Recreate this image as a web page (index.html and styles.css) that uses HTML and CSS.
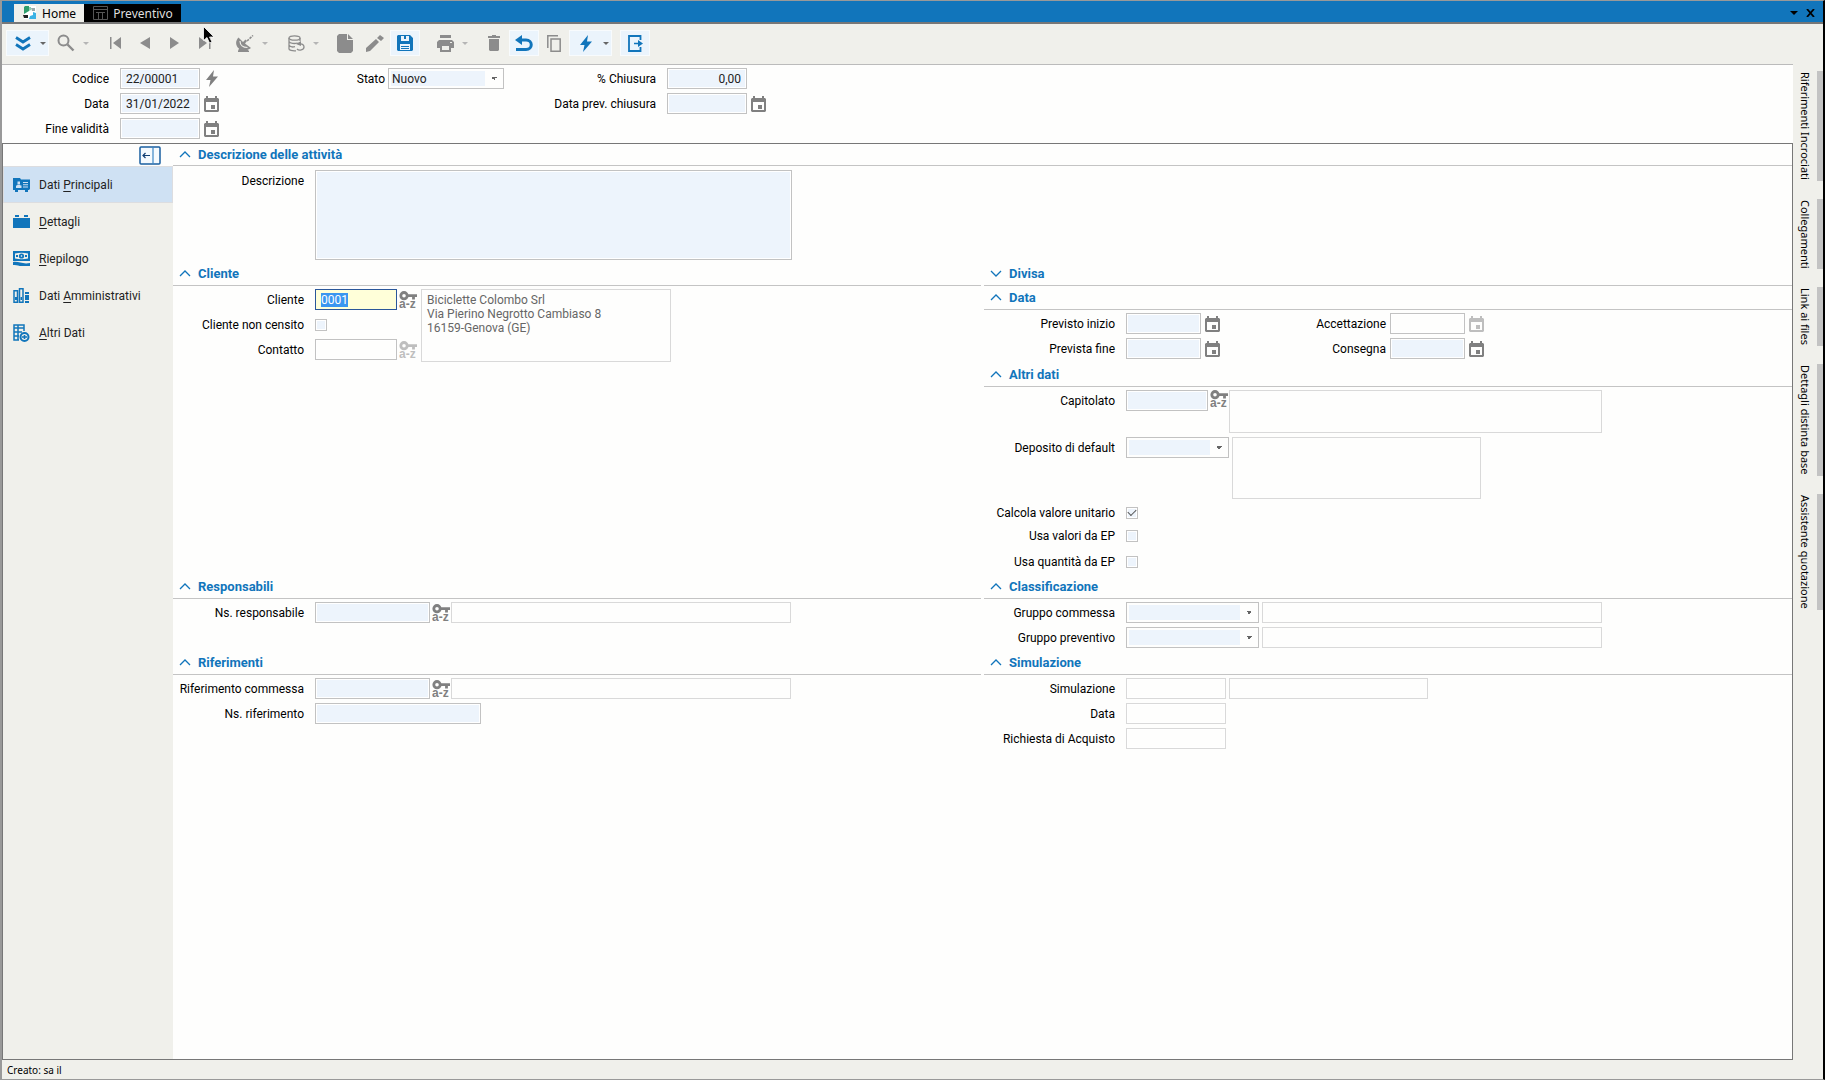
FILE: index.html
```html
<!DOCTYPE html>
<html lang="it">
  <head>
    <meta charset="UTF-8">
    <title>Preventivo</title>
    <link rel="stylesheet" href="styles.css">
  </head>
  <body>
    <svg class="defs" width="0" height="0" aria-hidden="true">
      <symbol id="i-cal" viewBox="0 0 15 16">
        <path fill="currentColor" fill-rule="evenodd" d="M2 0h2v2h7V0h2v2h1l1 1v12l-1 1H1l-1-1V3l1-1h1zM2 6v8h11V6zM7 9h4v4H7z"/>
      </symbol>
      <symbol id="i-key" viewBox="0 0 18 18">
        <path fill="none" stroke="currentColor" stroke-width="2.800" d="M5 1.500a3.200 3.200 0 1 1 0 6.400 3.200 3.200 0 0 1 0-6.400zM8.500 4.700H18M14.500 5v3.400"/>
        <text x="0" y="17" font-size="12" font-weight="700" fill="currentColor">a-z</text>
      </symbol>
      <symbol id="i-bolt" viewBox="0 0 12 17">
        <path fill="currentColor" d="M8 0 0 10h4.500L3 17l9-10.500H7z"/>
      </symbol>
      <symbol id="i-up" viewBox="0 0 12 7">
        <path fill="none" stroke="currentColor" stroke-width="1.300" d="m1 6 5-5 5 5"/>
      </symbol>
      <symbol id="i-down" viewBox="0 0 12 7">
        <path fill="none" stroke="currentColor" stroke-width="1.300" d="m1 1 5 5 5-5"/>
      </symbol>
    </svg>

    <header class="titlebar">
      <nav class="tabs">
        <a href="#home" class="tab">
          <svg width="14" height="14" viewBox="0 0 14 14"><path fill="#fff" d="M1 0h12v13H1z"/><path fill="#2f9e6b" d="M2 0h4v5L1 8V1z"/><path fill="#8fcfae" d="M6 1h2v3L6 5z"/><path fill="#222" d="M0 9h5v3H1z"/><path fill="#3bb2e4" d="m10 6 3 1v6H6l1-3 3-1z"/><path fill="#9aa" d="M8 2h4v3H9z"/></svg>
          Home
        </a>
        <a href="#preventivo" class="tab active">
          <svg width="15" height="14" viewBox="0 0 15 14"><path fill="none" stroke="#555" d="M.5.5h14v13H.5zM.5 3.500h14M3 6.500h9M5.500 7v6M9.500 7v6"/></svg>
          Preventivo
        </a>
      </nav>
      <div class="window-buttons">
        <button aria-label="Finestre"><svg width="8" height="4" viewBox="0 0 8 4"><path d="M0 0h8L4 4z"/></svg></button>
        <button aria-label="Chiudi"><svg width="9" height="8" viewBox="0 0 9 8"><path fill="none" stroke="#000" stroke-width="1.800" d="m1 0 7 8M8 0 1 8"/></svg></button>
      </div>
    </header>

    <div class="toolbar">
      <div class="tool-group">
        <button class="tool split on" aria-label="Espandi"><svg width="16" height="15" viewBox="0 0 16 15"><path fill="none" stroke="currentColor" stroke-width="2.800" d="m1 1.500 7 4.500 7-4.500M1 8.500l7 4.500 7-4.500"/></svg><i class="caret"></i></button>
        <button class="tool split" aria-label="Cerca"><svg width="18" height="18" viewBox="0 0 18 18"><circle cx="6.500" cy="6.500" r="5" fill="none" stroke="currentColor" stroke-width="2"/><path stroke="currentColor" stroke-width="2.400" d="m10.500 10.500 6 6"/></svg><i class="caret"></i></button>
      </div>
      <div class="tool-group">
        <button class="tool" aria-label="Primo"><svg width="11" height="12" viewBox="0 0 11 12"><path fill="currentColor" d="M0 0h1.500v12H0zM11 0v12L3 6z"/></svg></button>
        <button class="tool" aria-label="Precedente"><svg width="10" height="12" viewBox="0 0 10 12"><path fill="currentColor" d="M10 0v12L0 6z"/></svg></button>
        <button class="tool" aria-label="Successivo"><svg width="10" height="12" viewBox="0 0 10 12"><path fill="currentColor" d="M0 0v12l9-6z"/></svg></button>
        <button class="tool" aria-label="Ultimo"><svg width="12" height="12" viewBox="0 0 12 12"><path fill="currentColor" d="M0 0v12l8-6zM10 0h1.500v12H10z"/></svg></button>
      </div>
      <div class="tool-group">
        <button class="tool split" aria-label="Trasmetti"><svg width="18" height="17" viewBox="0 0 18 17"><path fill="currentColor" d="M2.500 2.500C-1 6-.5 11 3 13.500L2 16v1h11v-1l-1.500-1.500c1.500 0 2.500-.6 3.500-1.500L9 8.500 11 6 9.500 4.500 7 7z"/><path fill="none" stroke="#efefea" stroke-width="1.200" d="M4 6c0 4 3 6.500 7.500 6.500"/><path stroke="currentColor" stroke-width="1.600" stroke-dasharray="2.500 1" d="m11 6 6-5.500"/></svg><i class="caret"></i></button>
      </div>
      <div class="tool-group">
        <button class="tool split" aria-label="Archivio"><svg width="17" height="17" viewBox="0 0 17 17"><g fill="none" stroke="currentColor" stroke-width="1.300"><ellipse cx="6.500" cy="3" rx="5.500" ry="2.200"/><path d="M1 3v11c0 1 3 2.200 7 1.800M12 3v3M1 6.500c1 2 6 2.500 8 1.500M1 10.200c1 1.500 4 2 6 1.500M9 8l2 1c4-1 5 2 5 3 0 3-5 4-7 2"/></g><path fill="currentColor" d="m8 9 5-3v5z"/></svg><i class="caret"></i></button>
      </div>
      <div class="tool-group">
        <button class="tool" aria-label="Nuovo"><svg width="16" height="19" viewBox="0 0 16 19"><path fill="currentColor" d="M2 0h8v6h6v11l-2 2H2l-2-2V2zM11 0l5 5h-5z"/></svg></button>
        <button class="tool" aria-label="Modifica"><svg width="18" height="17" viewBox="0 0 18 17"><path fill="currentColor" d="M0 17v-4l10-9 3 3L4 16zM11 3l3-3 4 3-3 3z"/></svg></button>
        <button class="tool on" aria-label="Salva"><svg width="16" height="16" viewBox="0 0 16 16"><path fill="currentColor" fill-rule="evenodd" d="M1 0h12l3 3v12l-1 1H1l-1-1V1zM4 1v5h8V1H9v3H7V1zM3 9v6h10V9zM4 11h8v1H4zm0 2h8v1H4z"/></svg></button>
      </div>
      <div class="tool-group">
        <button class="tool split" aria-label="Stampa"><svg width="17" height="17" viewBox="0 0 17 17"><path fill="currentColor" fill-rule="evenodd" d="M3 0h11v3H3zM2 5h13l2 2v6h-3v4H3v-4H0V7zM5 11v4h7v-4zM13 7h2v1h-2z"/></svg><i class="caret"></i></button>
      </div>
      <div class="tool-group">
        <button class="tool" aria-label="Elimina"><svg width="12" height="16" viewBox="0 0 12 16"><path fill="currentColor" d="M4 0h4v1h4v2H0V1h4zM1 4h10v11l-1 1H2l-1-1z"/></svg></button>
        <button class="tool on" aria-label="Annulla"><svg width="18" height="17" viewBox="0 0 18 17"><path fill="none" stroke="currentColor" stroke-width="3" d="M4 5h7c7 0 7 9.500 0 9.500H1"/><path fill="currentColor" d="M0 5 7 0v10z"/></svg></button>
        <button class="tool" aria-label="Copia"><svg width="14" height="17" viewBox="0 0 14 17"><path fill="none" stroke="currentColor" stroke-width="1.500" d="M.8 13V.8H11M4 4h9.200v12.200H4z"/></svg></button>
        <button class="tool split on" aria-label="Azioni"><svg width="12" height="17"><use href="#i-bolt"/></svg><i class="caret"></i></button>
      </div>
      <div class="tool-group">
        <button class="tool on" aria-label="Esci"><svg width="15" height="17" viewBox="0 0 15 17"><path fill="none" stroke="currentColor" stroke-width="1.800" d="M12.500 5V1H1v15h11.500v-4"/><path fill="currentColor" d="M6 7.700h4V5l5 3.500L10 12V9.300H6z"/></svg></button>
      </div>
      <svg class="pointer" width="12" height="18" viewBox="0 0 12 18"><path stroke="#fff" stroke-width=".8" d="M.5.5v14L4 11.500 6.500 17 9 16l-2.500-5H11z"/></svg>
    </div>

    <div class="workspace">
      <main>
        <form class="head-form">
          <div class="head-col first">
            <div class="row"><label for="codice">Codice</label><input id="codice" value="22/00001"><button type="button" class="ico" aria-label="Genera codice"><svg width="12" height="17"><use href="#i-bolt"/></svg></button></div>
            <div class="row"><label for="data">Data</label><input id="data" value="31/01/2022"><button type="button" class="ico" aria-label="Calendario"><svg width="15" height="16"><use href="#i-cal"/></svg></button></div>
            <div class="row"><label for="validita">Fine validità</label><input id="validita"><button type="button" class="ico" aria-label="Calendario"><svg width="15" height="16"><use href="#i-cal"/></svg></button></div>
          </div>
          <div class="head-col second">
            <div class="row"><label for="stato">Stato</label><select id="stato"><option>Nuovo</option></select></div>
          </div>
          <div class="head-col third">
            <div class="row"><label for="chiusura">% Chiusura</label><input id="chiusura" class="num" value="0,00"></div>
            <div class="row"><label for="prev">Data prev. chiusura</label><input id="prev"><button type="button" class="ico" aria-label="Calendario"><svg width="15" height="16"><use href="#i-cal"/></svg></button></div>
          </div>
        </form>

        <div class="panel">
          <aside class="sidebar">
            <div class="sidebar-top">
              <button class="collapse" aria-label="Comprimi menu"><svg width="22" height="19" viewBox="0 0 22 19"><rect x="1" y="1" width="20" height="17" rx="1" fill="#f5fafe" stroke="#1a5fa0" stroke-width="1.500"/><path fill="none" stroke="#3c86c4" stroke-width="1.200" d="M14 1v17"/><path fill="none" stroke="#123f73" stroke-width="1.200" d="M11 9.500H4M6.500 7 4 9.500 6.500 12"/></svg></button>
            </div>
            <nav>
              <a href="#principali" class="active"><svg width="17" height="15" viewBox="0 0 17 15"><path fill="currentColor" d="M0 1h7l1 1.500h9V12l-1 1h-1v2h-3v-2H5v2H2v-2H0z"/><path fill="#cfe1f3" d="M4.500 4.500h2.500v2.500H4.500zM3 8.500h1l.5-1H7l.5 1h1V11H3zM10 5h5v1h-5zM10 7.300h5v1h-5zM10 9.500h5v1h-5z"/></svg><span>Dati <u>P</u>rincipali</span></a>
              <a href="#dettagli"><svg width="17" height="15" viewBox="0 0 17 15"><path fill="currentColor" d="M2 1h4v2H2zM11 1h4v2h-4zM0 4h17v10H0z"/></svg><span><u>D</u>ettagli</span></a>
              <a href="#riepilogo"><svg width="17" height="15" viewBox="0 0 17 15"><path fill="currentColor" d="M0 0h17v10H0zM0 11c6-1 9 2.500 17 1v3H9c-4 0-5-1.500-9-1z"/><path fill="#efefea" d="M2 2.500c4-1 9-1 13 0v5c-4 1-9 1-13 0z"/><circle cx="8.500" cy="5" r="2.600" fill="currentColor"/><circle cx="8.500" cy="5" r=".8" fill="#fff"/><path fill="currentColor" d="M3 4h2v2H3zM12 4h2v2h-2z"/></svg><span><u>R</u>iepilogo</span></a>
              <a href="#amministrativi"><svg width="17" height="15" viewBox="0 0 17 15"><path fill="none" stroke="currentColor" stroke-width="1.500" d="M1 2.800h3.500v11.500H1zM6.500.8H10v13.500H6.500z"/><path fill="currentColor" d="M2 9h2v3H2zM7.500 9h1.500v3H7.500zM12 4h4v2h-4zM12 7h4v5h-4zM12 13h4v2h-4z"/></svg><span>Dati <u>A</u>mministrativi</span></a>
              <a href="#altri"><svg width="17" height="18" viewBox="0 0 17 18"><path fill="none" stroke="currentColor" stroke-width="1.500" d="M6 16H1V1h10v6M1 4h10M1 8h8M1 12h5M5 1v15"/><circle cx="11.500" cy="13" r="4" fill="#efefea" stroke="currentColor" stroke-width="2"/><path fill="currentColor" d="M10.700 11h1.600v1.200H14v1.600h-1.700V15h-1.600v-1.200H9v-1.600h1.700z"/></svg><span><u>A</u>ltri Dati</span></a>
            </nav>
          </aside>

          <form class="content">
            <section class="wide">
              <h2><svg width="12" height="7"><use href="#i-up"/></svg>Descrizione delle attività</h2>
              <div class="body">
                <div class="row top"><label for="descrizione">Descrizione</label><textarea id="descrizione"></textarea></div>
              </div>
            </section>

            <div class="cell">
              <section>
                <h2><svg width="12" height="7"><use href="#i-up"/></svg>Cliente</h2>
                <div class="body customer">
                  <div>
                    <div class="row"><label for="cliente">Cliente</label><div class="focused w82"><input id="cliente" value="0001" size="4"></div><button type="button" class="ico key" aria-label="Ricerca"><svg width="18" height="18"><use href="#i-key"/></svg></button></div>
                    <div class="row"><label for="censito">Cliente non censito</label><input type="checkbox" id="censito"></div>
                    <div class="row"><label for="contatto">Contatto</label><input id="contatto" class="w82 plain"><button type="button" class="ico key off" aria-label="Ricerca"><svg width="18" height="18"><use href="#i-key"/></svg></button></div>
                  </div>
                  <output class="box address" for="cliente">Biciclette Colombo Srl<br>Via Pierino Negrotto Cambiaso 8<br>16159-Genova (GE)</output>
                </div>
              </section>
            </div>
            <div class="cell">
              <section>
                <h2><svg width="12" height="7"><use href="#i-down"/></svg>Divisa</h2>
              </section>
              <section>
                <h2><svg width="12" height="7"><use href="#i-up"/></svg>Data</h2>
                <div class="body">
                  <div class="row"><label for="inizio">Previsto inizio</label><input id="inizio" class="w75"><button type="button" class="ico" aria-label="Calendario"><svg width="15" height="16"><use href="#i-cal"/></svg></button><label for="accettazione" class="inner">Accettazione</label><input id="accettazione" class="w75 plain"><button type="button" class="ico off" aria-label="Calendario"><svg width="15" height="16"><use href="#i-cal"/></svg></button></div>
                  <div class="row"><label for="fine">Prevista fine</label><input id="fine" class="w75"><button type="button" class="ico" aria-label="Calendario"><svg width="15" height="16"><use href="#i-cal"/></svg></button><label for="consegna" class="inner">Consegna</label><input id="consegna" class="w75"><button type="button" class="ico" aria-label="Calendario"><svg width="15" height="16"><use href="#i-cal"/></svg></button></div>
                </div>
              </section>
              <section>
                <h2><svg width="12" height="7"><use href="#i-up"/></svg>Altri dati</h2>
                <div class="body">
                  <div class="row top"><label for="capitolato">Capitolato</label><input id="capitolato" class="w82"><button type="button" class="ico key" aria-label="Ricerca"><svg width="18" height="18"><use href="#i-key"/></svg></button><output class="box spec" for="capitolato"></output></div>
                  <div class="row top"><label for="deposito">Deposito di default</label><select id="deposito" class="w103"><option></option></select><output class="box depot" for="deposito"></output></div>
                  <div class="row check"><label for="unitario">Calcola valore unitario</label><input type="checkbox" id="unitario" checked></div>
                  <div class="row check"><label for="valori">Usa valori da EP</label><input type="checkbox" id="valori"></div>
                  <div class="row check spaced"><label for="quantita">Usa quantità da EP</label><input type="checkbox" id="quantita"></div>
                </div>
              </section>
            </div>

            <section>
              <h2><svg width="12" height="7"><use href="#i-up"/></svg>Responsabili</h2>
              <div class="body">
                <div class="row"><label for="responsabile">Ns. responsabile</label><input id="responsabile" class="w115"><button type="button" class="ico key" aria-label="Ricerca"><svg width="18" height="18"><use href="#i-key"/></svg></button><output class="box line" for="responsabile"></output></div>
              </div>
            </section>
            <section>
              <h2><svg width="12" height="7"><use href="#i-up"/></svg>Classificazione</h2>
              <div class="body">
                <div class="row"><label for="gcommessa">Gruppo commessa</label><select id="gcommessa" class="w133"><option></option></select><output class="box line" for="gcommessa"></output></div>
                <div class="row"><label for="gpreventivo">Gruppo preventivo</label><select id="gpreventivo" class="w133"><option></option></select><output class="box line" for="gpreventivo"></output></div>
              </div>
            </section>

            <section>
              <h2><svg width="12" height="7"><use href="#i-up"/></svg>Riferimenti</h2>
              <div class="body">
                <div class="row"><label for="rcommessa">Riferimento commessa</label><input id="rcommessa" class="w115"><button type="button" class="ico key" aria-label="Ricerca"><svg width="18" height="18"><use href="#i-key"/></svg></button><output class="box line" for="rcommessa"></output></div>
                <div class="row"><label for="riferimento">Ns. riferimento</label><input id="riferimento" class="w166"></div>
              </div>
            </section>
            <section>
              <h2><svg width="12" height="7"><use href="#i-up"/></svg>Simulazione</h2>
              <div class="body">
                <div class="row"><label for="simulazione">Simulazione</label><input id="simulazione" class="w100 readonly" readonly><output class="box short" for="simulazione"></output></div>
                <div class="row"><label for="simdata">Data</label><input id="simdata" class="w100 readonly" readonly></div>
                <div class="row"><label for="richiesta">Richiesta di Acquisto</label><input id="richiesta" class="w100 readonly" readonly></div>
              </div>
            </section>
          </form>
        </div>
      </main>

      <nav class="side-tabs">
        <a href="#incrociati">Riferimenti Incrociati</a>
        <a href="#collegamenti">Collegamenti</a>
        <a href="#files">Link ai files</a>
        <a href="#distinta">Dettagli distinta base</a>
        <a href="#quotazione">Assistente quotazione</a>
      </nav>
    </div>

    <footer>Creato: sa il</footer>
    <script>
      const cliente = document.querySelector('#cliente');
      cliente.focus();
      cliente.select();
    </script>
  </body>
</html>
```

FILE: styles.css
```css
html, body {
  height: 100%;
  margin: 0;
}
* {
  box-sizing: border-box;
}
body {
  display: flex;
  flex-direction: column;
  font-family: Roboto, Arial, sans-serif;
  font-size: 12px;
  color: #000;
  background: #f0f0eb;
  border: 1px solid #999;
  border-left-width: 2px;
  border-right: 2px solid #000;
  overflow: hidden;
}
a {
  color: inherit;
  text-decoration: none;
}
button {
  padding: 0;
  border: none;
  background: none;
  color: inherit;
}
svg {
  display: block;
  flex: none;
}
.defs {
  display: none;
}

/* title bar */
.titlebar {
  display: flex;
  justify-content: space-between;
  align-items: flex-end;
  height: 23px;
  padding-left: 12px;
  background: #1175bb;
  border-bottom: 2px solid #777;
  font-family: "Noto Sans", sans-serif;
}
.tabs {
  display: flex;
}
.tab {
  display: flex;
  align-items: center;
  gap: 5px;
  height: 18px;
  padding: 0 8px 0 9px;
  background: #f0f0eb;
}
.tab.active {
  background: #000;
  color: #dedede;
}
.window-buttons {
  display: flex;
  align-items: center;
  gap: 8px;
  height: 18px;
  padding-right: 8px;
}

/* toolbar */
.toolbar {
  position: relative;
  display: flex;
  gap: 8px;
  height: 40px;
  padding: 6px 4px;
  color: #8c8c8c;
}
.tool-group {
  display: flex;
}
.tool {
  display: flex;
  align-items: center;
  justify-content: center;
  width: 30px;
  height: 26px;
  border: 1px solid transparent;
}
.tool.split {
  width: 43px;
  padding-left: 2px;
}
.tool.split svg {
  margin: 0 auto;
}
.tool.on {
  color: #1175bb;
  background: #ebf4fc;
  border-color: #f8fbfd;
}
.caret {
  margin: 0 2px 0 3px;
  border: 3px solid transparent;
  border-top-color: #b5b5b5;
  border-bottom: none;
}
.on .caret {
  border-top-color: #666;
}
.pointer {
  position: absolute;
  left: 201px;
  top: 2px;
}

/* main area */
.workspace {
  display: flex;
  flex: 1;
  min-height: 0;
}
main {
  display: flex;
  flex-direction: column;
  flex: 1;
  min-width: 0;
  background: #fefefd;
  border-top: 1px solid #bbb;
}
.panel {
  display: flex;
  flex: 1;
  min-height: 0;
  border: 1px solid #777;
}

/* sidebar */
.sidebar {
  width: 170px;
  background: #f0f0eb;
}
.sidebar-top {
  display: flex;
  justify-content: flex-end;
  height: 22px;
  padding: 1px 12px 0 0;
  background: #fefefd;
}
.sidebar nav a {
  display: flex;
  align-items: center;
  gap: 9px;
  height: 37px;
  padding-left: 9px;
  border: 1px solid transparent;
  color: #222;
}
.sidebar nav svg {
  color: #1175bb;
}
.sidebar nav a.active {
  background: #cfe1f3;
  border-color: #dcdde0;
}
u {
  text-underline-offset: 2px;
}

/* form sections */
.content {
  display: grid;
  grid-template-columns: repeat(2, minmax(0, 1fr));
  grid-template-rows: auto auto 76px auto;
  column-gap: 3px;
  align-content: start;
  flex: 1;
  min-width: 0;
}
.wide {
  grid-column: span 2;
}
h2 {
  display: flex;
  align-items: center;
  gap: 7px;
  height: 24px;
  margin: 0;
  padding-left: 6px;
  border-bottom: 1px solid #c4c4c4;
  font-size: 13px;
  font-weight: 700;
  color: #1175bb;
}
.wide h2 {
  height: 22px;
}
.body {
  padding: 1px 0 2px;
}
.wide .body {
  padding: 2px 0 0;
}
.row {
  display: flex;
  align-items: center;
  min-height: 25px;
}
.row label {
  flex: none;
  width: 142px;
  padding-right: 11px;
  text-align: right;
  white-space: nowrap;
}
.row .inner {
  width: 170px;
  padding-right: 4px;
}
.row.top {
  align-items: flex-start;
  padding: 2px 0;
}
.row.top label {
  line-height: 22px;
}
.row.check {
  min-height: 23px;
}
.row.spaced {
  margin-top: 3px;
}

/* document header */
.head-form {
  display: flex;
  height: 78px;
  padding-top: 1px;
}
.head-col .row label {
  width: 118px;
}
.head-col input {
  width: 80px;
}
.second .row label {
  width: 169px;
  padding-right: 3px;
}
.second select {
  width: 116px;
}
.third .row label {
  width: 163px;
}

/* controls */
input, select, textarea {
  height: 21px;
  margin: 0;
  padding: 0 5px;
  border: 1px solid #c2c2c2;
  border-radius: 0;
  outline: none;
  box-shadow: inset 0 0 0 1px #fff;
  background: #edf4fc;
  font: inherit;
  color: #222;
}
select {
  appearance: none;
  padding: 0 3px;
  box-shadow: inset 0 0 0 2px #fefefd;
  background:
    linear-gradient(to top right, transparent 50%, #666 50%) right 9px center / 3px 3px no-repeat,
    linear-gradient(to top left, transparent 50%, #666 50%) right 6px center / 3px 3px no-repeat,
    linear-gradient(#fefefd, #fefefd) right / 18px 100% no-repeat,
    #edf4fc;
}
textarea {
  display: block;
  width: 477px;
  height: 90px;
  resize: none;
}
input[type=checkbox] {
  appearance: none;
  display: grid;
  place-items: center;
  width: 12px;
  height: 12px;
  padding: 0;
}
input[type=checkbox]:checked::before {
  content: '';
  width: 7px;
  height: 4px;
  border: solid #555;
  border-width: 0 0 1px 1px;
  transform: translateY(-1px) rotate(-45deg);
}
input.plain, input.readonly {
  background: #fefefd;
}
input.readonly {
  border-color: #d9d9d9;
}
.num {
  text-align: right;
}
.focused {
  height: 21px;
  padding: 2px 5px;
  border: 1px solid #2b579a;
  background: #ffffd9;
}
.focused input {
  display: block;
  width: 100%;
  height: 15px;
  padding: 0;
  border: none;
  box-shadow: none;
  background: none;
}
.focused input::selection {
  background: #3a96f0;
  color: #fff;
}
.box {
  flex: none;
  border: 1px solid #d9d9d9;
}
.line {
  width: 340px;
  height: 21px;
}
.short {
  width: 199px;
  height: 21px;
  margin-left: 3px;
}
select + .box {
  margin-left: 3px;
}
.spec {
  width: 373px;
  height: 43px;
}
.depot {
  width: 249px;
  height: 62px;
}
.customer {
  display: flex;
}
.address {
  align-self: flex-start;
  width: 250px;
  height: 73px;
  margin: 2px 0 0 3px;
  padding: 3px 5px;
  line-height: 14px;
  color: #666;
}
.ico {
  display: flex;
  justify-content: center;
  flex: none;
  width: 15px;
  margin-left: 4px;
  color: #808080;
}
.ico.key {
  width: 18px;
  margin: 0 1px 0 2px;
}
.ico.off {
  opacity: .5;
}
.w75 { width: 75px; }
.w82 { width: 82px; }
.w100 { width: 100px; }
.w103 { width: 103px; }
.w115 { width: 115px; }
.w133 { width: 133px; }
.w166 { width: 166px; }

/* vertical tabs */
.side-tabs {
  display: flex;
  flex-direction: column;
  align-items: flex-end;
  gap: 18px;
  width: 30px;
  padding-top: 7px;
  font-family: "Noto Sans", sans-serif;
  font-size: 11px;
}
.side-tabs a {
  writing-mode: vertical-rl;
  padding: 1px 4px 1px 0;
  border-right: 6px solid #c3c3c3;
}

footer {
  height: 19px;
  padding-left: 5px;
  font-family: "Noto Sans", sans-serif;
  font-size: 10px;
  line-height: 20px;
}
```
